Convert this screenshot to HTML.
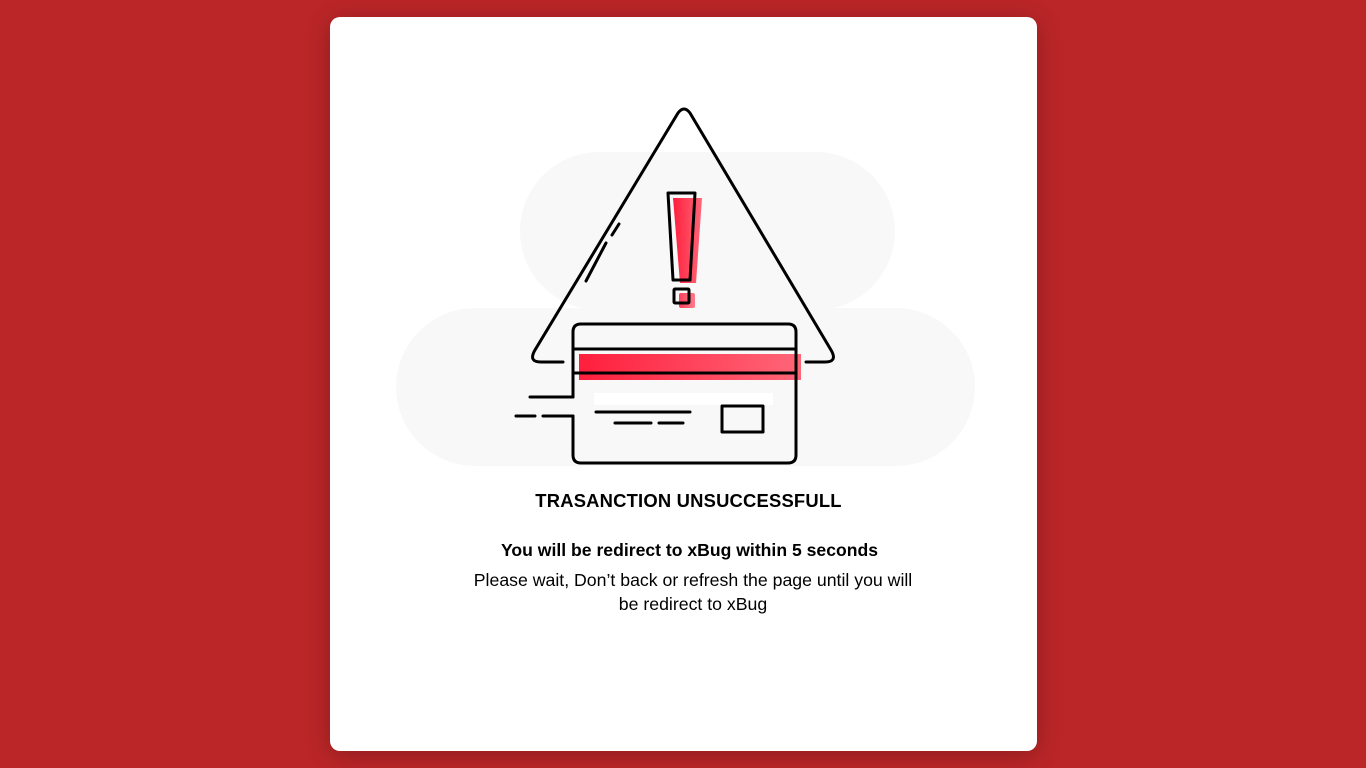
<!DOCTYPE html>
<html><head><meta charset="utf-8"><style>
html,body{margin:0;padding:0}
body{width:1366px;height:768px;background:#bb2628;position:relative;overflow:hidden;font-family:"Liberation Sans",sans-serif}
.card{position:absolute;left:330px;top:17px;width:707px;height:734px;background:#fff;border-radius:10px;box-shadow:0 4px 24px rgba(0,0,0,.25)}
svg{position:absolute;left:0;top:0}
.t{position:absolute;left:330px;width:707px;text-align:center;color:#000}
</style></head><body>
<div class="card"></div>
<svg width="1366" height="768" viewBox="0 0 1366 768">
<defs><linearGradient id="g" x1="0" x2="1"><stop offset="0" stop-color="#ff1f3d"/><stop offset="1" stop-color="#ff6678"/></linearGradient></defs>
<rect x="520" y="152" width="375" height="158" rx="79" fill="#f8f8f8"/>
<rect x="396" y="308" width="579" height="158" rx="79" fill="#f8f8f8"/>
<g fill="none" stroke="#000" stroke-width="3" stroke-linecap="round" stroke-linejoin="round">
<path d="M563 362 H541 Q528 362 535 350 L678 113 Q684 105 690 113 L831 350 Q838 362 825 362 H806"/>
<path d="M619 224 L612 235 M606 243 L586 281"/>
</g>
<path d="M673 198 H702 L696 283 H680 Z" fill="url(#g)"/>
<rect x="679" y="293" width="16" height="15" rx="2" fill="url(#g)" opacity=".85"/>
<g fill="none" stroke="#000" stroke-width="3" stroke-linejoin="round" stroke-linecap="round">
<path d="M668 193 H695 L690 280 H673 Z"/>
<rect x="674" y="289" width="15" height="14" rx="1"/>
</g>
<rect x="579" y="354" width="222" height="26" fill="url(#g)"/>
<rect x="594" y="393" width="179" height="12" fill="#fff"/>
<g fill="none" stroke="#000" stroke-width="3" stroke-linecap="round" stroke-linejoin="round">
<path d="M573 397 V332 Q573 324 581 324 H788 Q796 324 796 332 V455 Q796 463 788 463 H581 Q573 463 573 455 V416"/>
<path d="M573 349 H796 M573 373 H796"/>
<path d="M530 397 H573 M516 416 H535 M543 416 H573"/>
<path d="M596 412 H690 M615 423 H651 M659 423 H683"/>
<rect x="722" y="406" width="41" height="26"/>
</g>
</svg>
<div class="t" style="top:490px;left:335px;font-size:18.4px;font-weight:bold;letter-spacing:.2px">TRASANCTION UNSUCCESSFULL</div>
<div class="t" style="top:540px;font-size:17.6px;font-weight:bold;left:336px">You will be redirect to xBug within 5 seconds</div>
<div class="t" style="top:568px;font-size:17.7px;line-height:24px;left:466px;width:454px">Please wait, Don’t back or refresh the page until you will be redirect to xBug</div>
</body></html>
